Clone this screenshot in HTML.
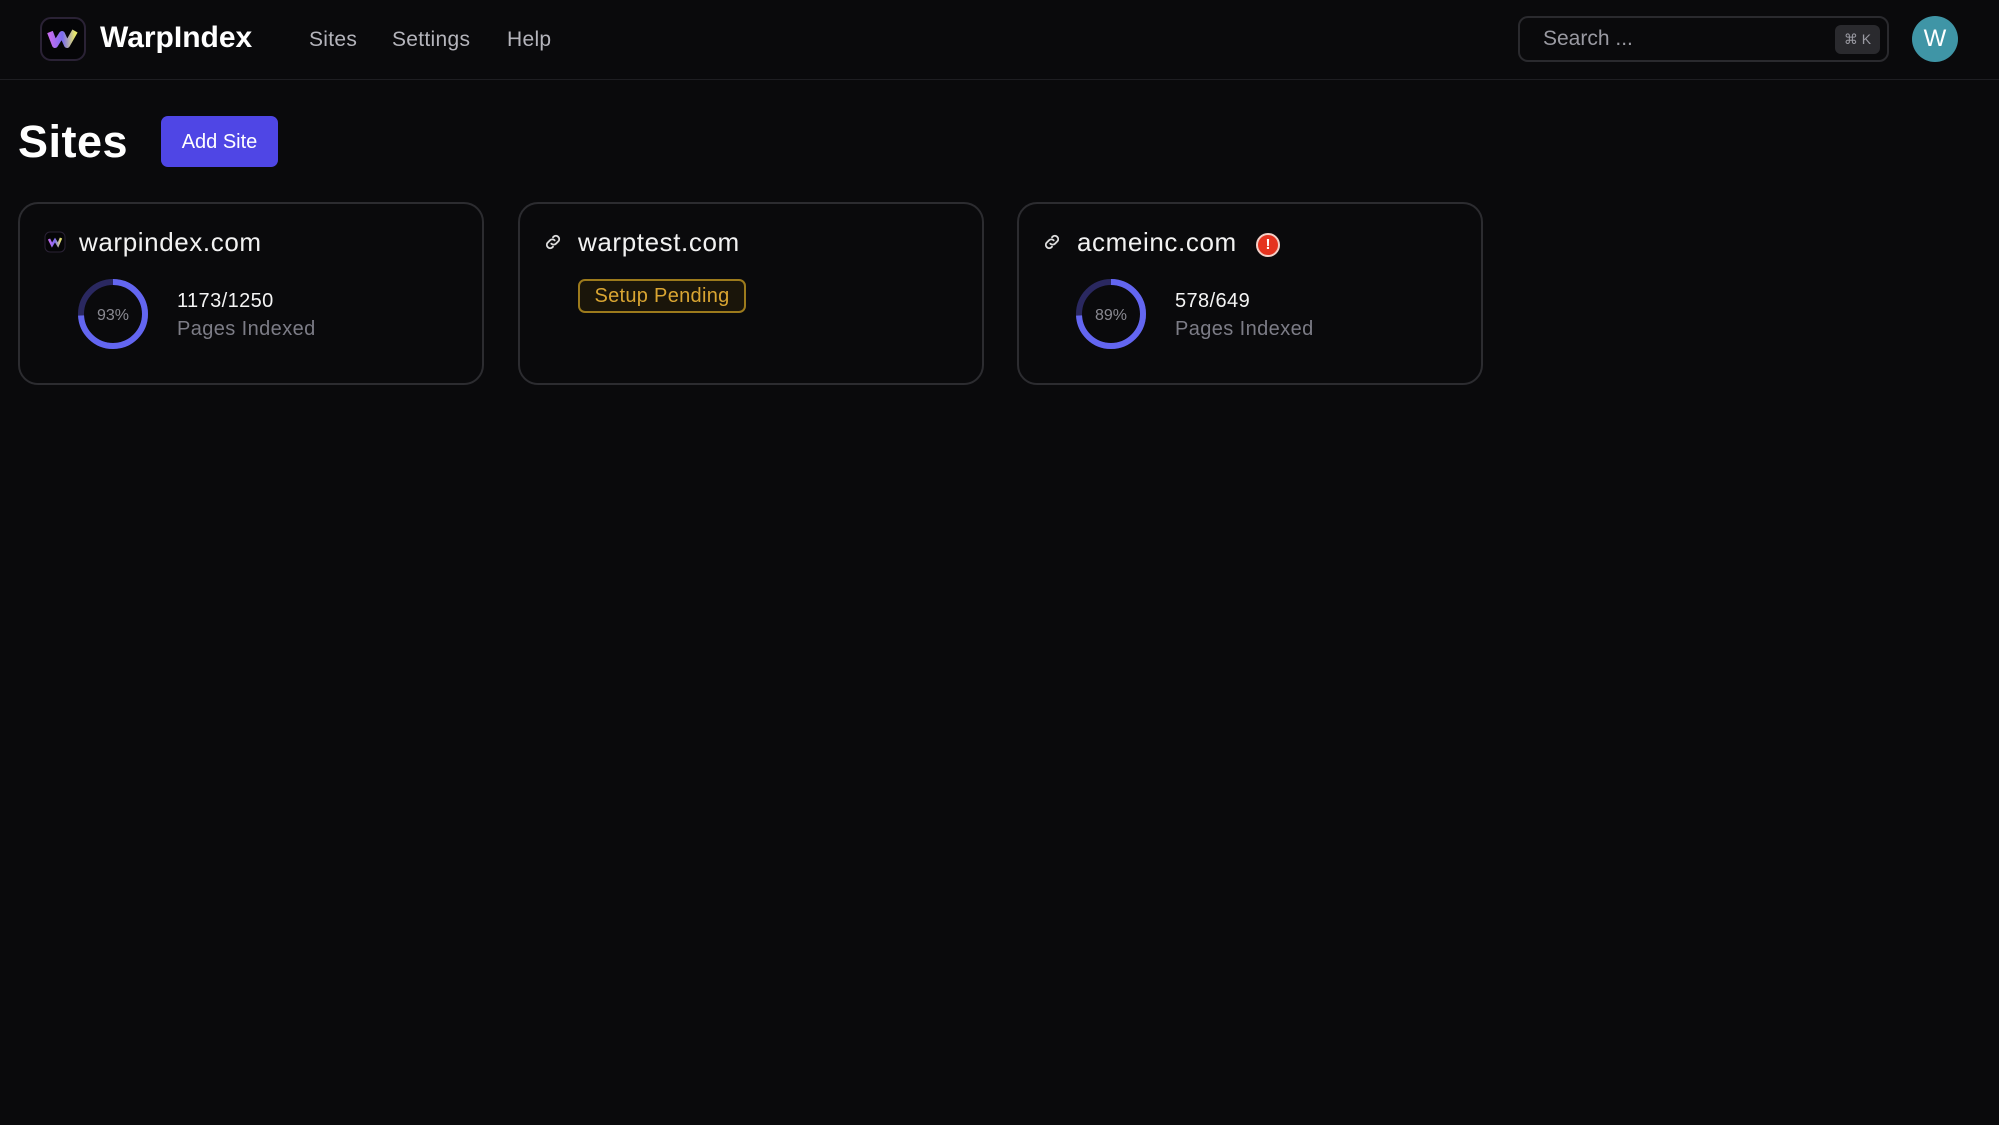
<!DOCTYPE html>
<html><head><meta charset="utf-8"><style>
*{box-sizing:border-box;margin:0;padding:0}
body{width:1999px;height:1125px;background:#0a0a0c;font-family:"Liberation Sans",sans-serif;color:#fff;position:relative;overflow:hidden}
.a{position:absolute}
.hdr{left:0;top:0;width:1999px;height:80px;border-bottom:1px solid #1e1e22}
.nav{font-size:21px;color:#b4b4bb;top:28px;letter-spacing:0.3px}
.card{top:202px;width:466px;height:183px;border:2px solid #2c2c30;border-radius:20px}
.title{font-size:26px;color:#f2f2f2;top:227px;letter-spacing:0.6px}
.num{font-size:20px;color:#f4f4f4;top:290px;letter-spacing:0.4px}
.lbl{font-size:20px;color:#7c7c86;top:318px;letter-spacing:0.4px}
</style></head><body>
<div class="a hdr"></div>
<svg class="a" style="left:38px;top:15px" width="50" height="48" viewBox="0 0 50 48">
<defs><linearGradient id="g" x1="0" x2="1"><stop offset="0" stop-color="#c46cf0"/><stop offset=".5" stop-color="#7a6cf0"/><stop offset="1" stop-color="#e8e86a"/></linearGradient></defs>
<rect x="3" y="3" width="44" height="42" rx="10" fill="#050507" stroke="#2a2235" stroke-width="2"/>
<path d="M12 17 L17 30 L24 19 L29 30 L37 16" fill="none" stroke="url(#g)" stroke-width="6" stroke-linejoin="round"/>
</svg>
<div class="a" style="left:100px;top:21px;font-size:30px;font-weight:bold">WarpIndex</div>
<div class="a nav" style="left:309px">Sites</div>
<div class="a nav" style="left:392px">Settings</div>
<div class="a nav" style="left:507px">Help</div>
<div class="a" style="left:1518px;top:16px;width:371px;height:46px;border:2px solid #2a2a2e;border-radius:10px"></div>
<div class="a" style="left:1543px;top:27px;font-size:21px;color:#9a9aa2">Search ...</div>
<div class="a" style="left:1835px;top:25px;width:45px;height:29px;background:#2a2a2e;border-radius:6px;font-size:14px;color:#9a9aa2;text-align:center;line-height:29px">⌘ K</div>
<div class="a" style="left:1912px;top:16px;width:46px;height:46px;border-radius:50%;background:#3f95a6;font-size:24px;text-align:center;line-height:46px">W</div>
<div class="a" style="left:18px;top:116px;font-size:45px;font-weight:bold;letter-spacing:0.5px">Sites</div>
<div class="a" style="left:161px;top:116px;width:117px;height:51px;background:#4f46e5;border-radius:7px;font-size:20px;text-align:center;line-height:53px">Add Site</div>

<div class="a card" style="left:18px"></div>
<div class="a card" style="left:518px"></div>
<div class="a card" style="left:1017px"></div>

<svg class="a" style="left:44px;top:231px" width="22" height="22" viewBox="0 0 22 22"><rect x="1" y="1" width="20" height="20" rx="5" fill="#050507" stroke="#2a2235"/><path d="M5 8 L8 14 L11 9 L14 14 L17 7" fill="none" stroke="url(#g)" stroke-width="2.5"/></svg>
<div class="a title" style="left:79px">warpindex.com</div>

<svg class="a" style="left:543px;top:232px" width="20" height="20" viewBox="0 0 24 24" fill="none" stroke="#ddd" stroke-width="2.2" stroke-linecap="round"><path d="M10 14a4 4 0 0 0 5.6 0l3-3a4 4 0 0 0-5.6-5.6l-1 1"/><path d="M14 10a4 4 0 0 0-5.6 0l-3 3a4 4 0 0 0 5.6 5.6l1-1"/></svg>
<div class="a title" style="left:578px">warptest.com</div>
<div class="a" style="left:578px;top:279px;width:168px;height:34px;border:2px solid #9c7a1c;background:#1a150a;border-radius:7px;color:#d9a532;font-size:20px;text-align:center;line-height:31px;letter-spacing:0.3px">Setup Pending</div>

<svg class="a" style="left:1042px;top:232px" width="20" height="20" viewBox="0 0 24 24" fill="none" stroke="#ddd" stroke-width="2.2" stroke-linecap="round"><path d="M10 14a4 4 0 0 0 5.6 0l3-3a4 4 0 0 0-5.6-5.6l-1 1"/><path d="M14 10a4 4 0 0 0-5.6 0l-3 3a4 4 0 0 0 5.6 5.6l1-1"/></svg>
<div class="a title" style="left:1077px">acmeinc.com</div>
<div class="a" style="left:1256px;top:233px;width:24px;height:24px;border-radius:50%;background:#e5331f;border:2px solid #f3d0c8;font-size:15px;font-weight:bold;text-align:center;line-height:20px">!</div>

<svg class="a" style="left:77px;top:278px" width="72" height="72" viewBox="0 0 72 72"><circle cx="36" cy="36" r="32" fill="none" stroke="#2a2860" stroke-width="6"/><circle cx="36" cy="36" r="32" fill="none" stroke="#6366f1" stroke-width="6" stroke-dasharray="149 201" transform="rotate(-90 36 36)"/><text x="36" y="42" font-size="16" fill="#8a8a92" text-anchor="middle" font-family="Liberation Sans">93%</text></svg>
<div class="a num" style="left:177px">1173/1250</div>
<div class="a lbl" style="left:177px">Pages Indexed</div>

<svg class="a" style="left:1075px;top:278px" width="72" height="72" viewBox="0 0 72 72"><circle cx="36" cy="36" r="32" fill="none" stroke="#2a2860" stroke-width="6"/><circle cx="36" cy="36" r="32" fill="none" stroke="#6366f1" stroke-width="6" stroke-dasharray="149 201" transform="rotate(-90 36 36)"/><text x="36" y="42" font-size="16" fill="#8a8a92" text-anchor="middle" font-family="Liberation Sans">89%</text></svg>
<div class="a num" style="left:1175px">578/649</div>
<div class="a lbl" style="left:1175px">Pages Indexed</div>
</body></html>
